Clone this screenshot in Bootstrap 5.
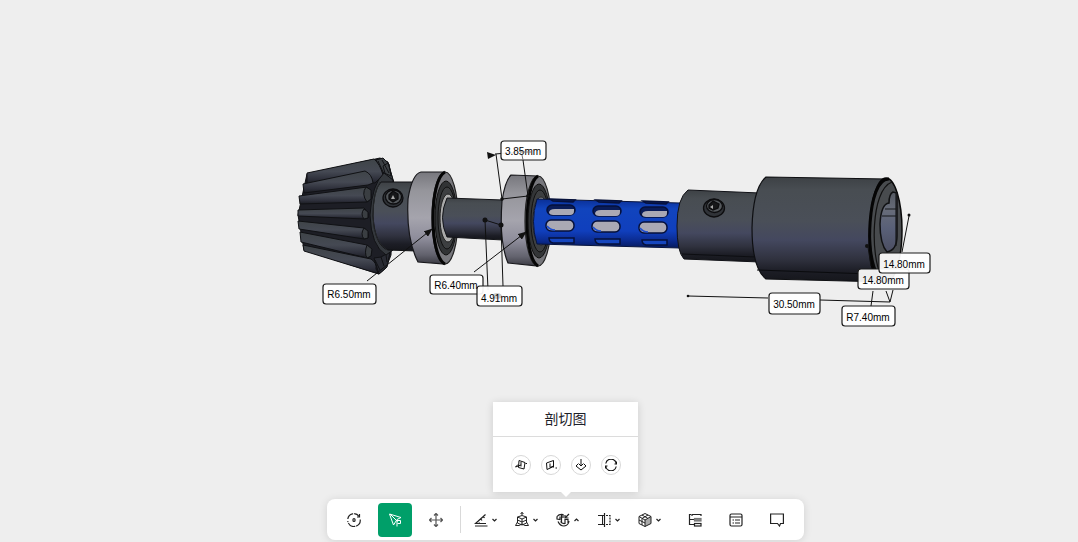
<!DOCTYPE html>
<html lang="zh-CN">
<head>
<meta charset="utf-8">
<meta name="viewport" content="width=device-width, initial-scale=1">
<title>剖切图</title>
<link href="https://cdn.jsdelivr.net/npm/bootstrap@5.3.0/dist/css/bootstrap.min.css" rel="stylesheet">
<style>
  body { background: #eee; font-family: "Liberation Sans", "Noto Sans CJK SC", sans-serif; }
  .viewer { height: 100vh; min-height: 400px; }
  .scene { min-height: 0; }
  .scene text { font: 10px "Liberation Sans", sans-serif; fill: #000; text-anchor: middle; }
  .tag { fill: #fff; fill-opacity: .93; stroke: #1b1b1b; stroke-width: 1.2; }
  .dim { stroke: #111; stroke-width: 1; fill: none; }
  .dock { padding: 0 0 2px 53px; }
  .panel { width: 145px; height: 90px; margin-bottom: 7px; background: #fff; box-shadow: 0 1px 8px rgba(0,0,0,.14); }
  .panel::after { content: ""; position: absolute; left: 50%; top: 100%; margin-left: -5px; border: 5px solid transparent; border-top-color: #fff; border-bottom: 0; }
  .panel-title { height: 35px; font-size: 14px; line-height: 35px; color: #1d2129; border-bottom: 1px solid #dcdcdc; }
  .cuts { gap: 10px; padding-top: 18px; }
  .cut { width: 20px; height: 20px; border: 1px solid #d8d8d8; background: #fff; border-radius: 50%; color: #111; }
  .tools { height: 41px; padding: 0 10px; background: #fff; border-radius: 8px; box-shadow: 0 1px 8px rgba(0,0,0,.12); }
  .tool { height: 34px; width: 34px; border: 0; background: transparent; border-radius: 4px; color: #222; }
  .tool.wide { width: 41px; gap: 3px; }
  .tool.wide .ico:first-child { margin-left: -3px; }
  .tool.on { background: #009f69; color: #fff; }
  .tool-set { gap: 7px; }
  .rule { width: 1px; height: 27px; background: #d9d9d9; margin: 0 6px 0 7px; }
  .tool-set.last { margin-left: 6px; }
  .ico { fill: none; stroke: currentColor; stroke-width: 1.2; }
  .ico.fine { stroke-width: 1; }
</style>
</head>
<body>
<main class="viewer d-flex flex-column overflow-hidden">
  <svg class="scene flex-grow-1 w-100" viewBox="0 0 1078 402" role="img" aria-label="3D 模型">
    <defs>
      <linearGradient id="steel" x1="0" y1="0" x2="0" y2="1">
        <stop offset="0" stop-color="#3d4145"/><stop offset=".12" stop-color="#484d52"/><stop offset=".42" stop-color="#4a4f58"/><stop offset=".6" stop-color="#44485f"/><stop offset=".78" stop-color="#30323f"/><stop offset=".9" stop-color="#1c1d25"/><stop offset="1" stop-color="#15161b"/>
      </linearGradient>
      <linearGradient id="chrome" x1="0" y1="0" x2="0" y2="1">
        <stop offset="0" stop-color="#77777d"/><stop offset=".2" stop-color="#95959b"/><stop offset=".5" stop-color="#a5a4ad"/><stop offset=".72" stop-color="#8e8d9b"/><stop offset=".9" stop-color="#62626d"/><stop offset="1" stop-color="#3a3a42"/>
      </linearGradient>
      <linearGradient id="blue" x1="0" y1="0" x2="0" y2="1">
        <stop offset="0" stop-color="#0a2f96"/><stop offset=".2" stop-color="#1144bd"/><stop offset=".65" stop-color="#103fbd"/><stop offset=".85" stop-color="#0b2b90"/><stop offset="1" stop-color="#061a5c"/>
      </linearGradient>
      <linearGradient id="tooth" x1="0" y1="0" x2="0" y2="1">
        <stop offset="0" stop-color="#3f4448"/><stop offset=".5" stop-color="#454953"/><stop offset=".8" stop-color="#2e303b"/><stop offset="1" stop-color="#1a1b21"/>
      </linearGradient>
      <linearGradient id="bore" x1="0" y1="0" x2="0" y2="1">
        <stop offset="0" stop-color="#555a63"/><stop offset=".3" stop-color="#676c79"/><stop offset=".6" stop-color="#596078"/><stop offset="1" stop-color="#4b4e62"/>
      </linearGradient>
      <marker id="head" markerWidth="9" markerHeight="7" refX="8" refY="3.5" orient="auto" markerUnits="userSpaceOnUse"><path d="M0 0 9 3.5 0 7z" fill="#111"/></marker>
    </defs>

    <!-- bevel gear -->
    <g stroke="#101114" stroke-width="1">
      <path d="M307 174 380 158 388 162 393 180 391 255 386 268 379 274 304 250 298 215z" fill="#1d1e25"/>
      <path d="M376 160 383 158 389 164 391 176 382 172zM383 166 388 163 394 183 388 184z" fill="#3c4044"/>
      <path d="M307 173 374 159Q380 164 383 175L375 183 307 184z" fill="url(#tooth)"/>
      <path d="M303 184 365 171Q372 174 373 183L368 185 304 193z" fill="url(#tooth)"/>
      <path d="M299 196 367 187Q372 191 371 199L367 202 300 204z" fill="url(#tooth)"/>
      <path d="M298 210 364 208Q370 213 368 218L364 219 298 216z" fill="url(#tooth)"/>
      <path d="M298 221 364 228Q370 232 368 238L364 239 299 229z" fill="url(#tooth)"/>
      <path d="M300 232 367 245Q373 249 371 256L367 258 301 242z" fill="url(#tooth)"/>
      <path d="M303 245 371 259Q377 263 376 269L379 274 304 251z" fill="url(#tooth)"/>
      <path d="M366 187Q361 194 367 202L371 199 371 190zM364 209Q360 214 364 219L368 218 368 212zM364 228Q360 234 364 239L368 238 368 231zM367 245Q364 253 367 258L371 256 372 249z" fill="#3a3e42"/>
      <path d="M374 258 381 257 390 252 387 267 379 274z" fill="#292b33"/>
      <path d="M375 260 380 270M381 257 384 266M386 255 387 262M378 161 384 174M382 160 389 173" fill="none"/>
      <path d="M384 173Q372 184 370 215 371 246 386 255L393 250 393 180z" fill="#34383d"/>
      <path d="M381 182H416V251L388 250Q375 246 373 216 373 190 381 182z" fill="url(#steel)"/>
    </g>
    <path d="M380 182Q373 193 373 217 374 242 387 250" fill="none" stroke="#252729"/>
    <g stroke="#0d0d0f" stroke-width="1.3">
      <ellipse cx="393" cy="198" rx="10" ry="9" fill="#303338"/><ellipse cx="393.5" cy="197" rx="8" ry="7" fill="#53575b"/><path d="M389 195 393 191 398 194 398 199 393 202 389 199z" fill="#17181a"/>
    </g>
    <path d="M391 199 393 195 395 199z" fill="#aaa"/>

    <!-- first bearing and shaft -->
    <path d="M445 172H421Q412 174 408 199 406 239 418 262L445 264z" fill="url(#chrome)" stroke="#17171b" stroke-width="1.2"/>
    <ellipse cx="445" cy="218" rx="13" ry="46" fill="#77777c" stroke="#222" stroke-width="1.2"/>
    <path d="M445 172C429 180 429 256 445 264" fill="none" stroke="#050505" stroke-width="3"/>
    <ellipse cx="446" cy="218" rx="11" ry="37" fill="#313335" stroke="#111"/>
    <ellipse cx="447" cy="218" rx="9" ry="31" fill="#3d3f41" stroke="#111"/>
    <ellipse cx="448" cy="218" rx="8" ry="24" fill="#aaa" stroke="#222"/>
    <path d="M447 198 503 200V240L447 237Q438 218 447 198z" fill="url(#steel)" stroke="#141519"/>

    <!-- second bearing -->
    <path d="M538 176 511 175Q505 181 502 201 499 242 508 263L538 266z" fill="url(#chrome)" stroke="#17171b" stroke-width="1.2"/>
    <ellipse cx="538" cy="221" rx="13" ry="45" fill="#77777c" stroke="#222" stroke-width="1.2"/>
    <path d="M538 176C524 184 523 257 538 266" fill="none" stroke="#050505" stroke-width="3"/>
    <ellipse cx="539" cy="221" rx="11" ry="37" fill="#333537" stroke="#111"/>
    <ellipse cx="540" cy="221" rx="9" ry="31" fill="#3d3f41" stroke="#111"/>
    <ellipse cx="541" cy="221" rx="8" ry="24" fill="#999" stroke="#222"/>

    <!-- slotted sleeve -->
    <path d="M537 199 680 203V248L537 244Q530 222 537 199z" fill="url(#blue)" stroke="#08153f"/>
    <g stroke="#06113b" stroke-width="1.5">
      <g id="slots">
        <path d="M550 199 575 200 573 202 553 201z" fill="#091d5f"/>
        <rect x="547" y="205" width="28" height="10" rx="5" fill="#0a1c58"/><path d="M549 213Q549 209 555 209H574V211Q574 215 570 215H553Q550 215 549 213z" fill="#aaa9b4" stroke="none"/>
        <rect x="546" y="220" width="28" height="11" rx="5" fill="#aaa9b4"/><path d="M547 226Q550 230 555 230" stroke="#1d4ed0" fill="none"/>
        <path d="M549 238H574V243H553Q549 242 549 238z" fill="#1646be"/>
      </g>
      <use href="#slots" x="46" y="1"/>
      <use href="#slots" x="93" y="2"/>
    </g>

    <!-- couplings -->
    <path d="M688 190 760 193V262L684 259Q677 252 677 226 677 198 688 190z" fill="url(#steel)" stroke="#111217"/>
    <path d="M682 254 756 257" stroke="#0d0e12"/>
    <g stroke="#0d0d0f" stroke-width="1.3">
      <ellipse cx="714" cy="208" rx="10.5" ry="9" fill="#303338"/><ellipse cx="714.5" cy="206" rx="8" ry="6.5" fill="#55595d"/><path d="M709 205 713 201 719 204 718 208 713 210 709 208z" fill="#17181a"/>
    </g>
    <path d="M710 207 713 205 713 209z" fill="#aaa"/>
    <path d="M766 177 886 179V282L766 279Q752 268 752 228 753 188 766 177z" fill="url(#steel)" stroke="#0e0f12" stroke-width="1.2"/>
    <path d="M757 270 870 274" stroke="#0a0b0e"/>
    <ellipse cx="886" cy="230" rx="16" ry="52" fill="#484b4e" stroke="#090909" stroke-width="1.5"/>
    <path d="M889 179C866 178 866 263 876 275" fill="none" stroke="#050505" stroke-width="3"/>
    <path d="M892 182C870 190 871 258 881 275" fill="none" stroke="#111" stroke-width="1.2"/>
    <path d="M893 192Q889 194 889 203 881 204 880 224 880 244 887 252 897 250 897 236V193z" fill="url(#bore)" stroke="#101113" stroke-width="1.5"/>
    <path d="M885 209H896M882 216H896M896 193V246" stroke="#17181a" stroke-width="1.2"/>

    <!-- dimension lines -->
    <g class="dim">
      <path d="M367 281 432 229" marker-end="url(#head)"/>
      <path d="M474 272 526 232" marker-end="url(#head)"/>
      <path d="M496 154 502 199 528 196 523 160M485 220 501 225M485 220 488 290M501 225 503 286"/>
      <path d="M495 154 520 152"/>
      <path d="M688 296 768 298M820 300 890 302 886 291M890 302 893 290M871 306 873 291M909 216 902 252"/>
      <path d="M871 266 868 247"/>
    </g>
    <path d="M487 152 496 155 488 159z" fill="#111"/>
    <g fill="#111"><circle cx="485" cy="220" r="2.5"/><circle cx="501" cy="225" r="2.5"/><circle cx="502" cy="199" r="1.8"/><circle cx="528" cy="196" r="1.8"/><circle cx="688" cy="296" r="1.3"/><circle cx="909" cy="215" r="1.5"/><circle cx="867" cy="246" r="2"/></g>

    <!-- dimension tags -->
    <rect class="tag" x="501" y="141" width="45" height="19" rx="3"/><text x="523" y="155">3.85mm</text>
    <rect class="tag" x="323" y="284" width="53" height="20" rx="3"/><text x="349" y="298">R6.50mm</text>
    <rect class="tag" x="430" y="275" width="53" height="19" rx="3"/><text x="456" y="289">R6.40mm</text>
    <rect class="tag" x="477" y="286" width="45" height="20" rx="3"/><ellipse cx="497" cy="296" rx="5" ry="3" fill="#ccc"/><text x="499" y="302">4.91mm</text>
    <rect class="tag" x="769" y="293" width="51" height="21" rx="3"/><text x="794" y="308">30.50mm</text>
    <rect class="tag" x="858" y="269" width="51" height="20" rx="3"/><text x="883" y="284">14.80mm</text>
    <rect class="tag" x="879" y="253" width="51" height="20" rx="3"/><text x="904" y="268">14.80mm</text>
    <rect class="tag" x="842" y="306" width="53" height="20" rx="3"/><text x="868" y="321">R7.40mm</text>
    <path d="M520 152H531M522 155 523 160" stroke="#777"/>
  </svg>

  <div class="dock d-flex flex-column align-items-center flex-shrink-0">
    <section class="panel position-relative" aria-label="剖切图">
      <div class="panel-title text-center">剖切图</div>
      <div class="cuts d-flex justify-content-center">
        <button class="cut p-0 d-flex align-items-center justify-content-center" aria-label="X 平面"><svg class="ico fine" width="12" height="12" viewBox="0 0 12 12"><path d="M4 1.5 10 3.5 9 10 3.5 8.5zM.5 8 6 6M6 3V7.5M10.5 4.5H12M.5 8 3 5.5"/></svg></button>
        <button class="cut p-0 d-flex align-items-center justify-content-center" aria-label="Y 平面"><svg class="ico fine" width="12" height="12" viewBox="0 0 12 12"><path d="M1.5 4 8.5 1.500V7.5L2 10.500zM8.500 2V8.500M5 8.500 8.500 7M5 4.500V8.500M10.500 9H12"/></svg></button>
        <button class="cut p-0 d-flex align-items-center justify-content-center" aria-label="Z 平面"><svg class="ico fine" width="12" height="12" viewBox="0 0 12 12"><path d="M3.500 4.500 1 7 6 11 11 7 8.500 4.500M6 0V7M4 5 6 7 8 5"/></svg></button>
        <button class="cut p-0 d-flex align-items-center justify-content-center" aria-label="反向"><svg class="ico" width="12" height="12" viewBox="0 0 12 12"><path d="M.8 4.500A5.300 5.300 0 0 1 11.200 4.500M11.500 2.500V5H9.500M11.200 7.500A5.300 5.300 0 0 1 .8 7.500M.5 9.500V7H2.500"/></svg></button>
      </div>
    </section>

    <nav class="tools d-flex align-items-center" aria-label="工具栏">
      <div class="tool-set d-flex">
        <button class="tool p-0 d-flex align-items-center justify-content-center" aria-label="旋转"><svg class="ico" width="14" height="14" viewBox="0 0 14 14"><path d="M.8 6A6.200 6.200 0 0 1 12 3.300M13.200 6.500A6.200 6.200 0 0 1 .8 8" stroke-dasharray="8 1"/><path d="M12.500 1V4H10"/><rect x="6" y="5.500" width="2" height="3" rx="1"/></svg></button>
        <button class="tool on p-0 d-flex align-items-center justify-content-center" aria-label="选择" aria-pressed="true"><svg class="ico fine" width="14" height="14" viewBox="0 0 14 14"><path d="M1.500 1 13 4.500 9 6.500 5.500 12zM2 1 9.500 8.500M9 13.500V7.500H12.500V10.500H9.500"/></svg></button>
        <button class="tool p-0 d-flex align-items-center justify-content-center" aria-label="平移"><svg class="ico" width="14" height="14" viewBox="0 0 14 14" stroke-linejoin="round"><path d="M7 1V13M1 7H13M5 2.500 7 .5 9 2.500M5 11.500 7 13.500 9 11.500M2.500 5 .5 7 2.500 9M11.500 5 13.500 7 11.500 9" stroke="#555"/></svg></button>
      </div>
      <div class="rule"></div>
      <button class="tool wide p-0 d-flex align-items-center justify-content-center" aria-label="测量"><svg class="ico" width="14" height="14" viewBox="0 0 14 14"><path d="M1 13H13.500M11.500 1.500 1.500 10.500H12M4 7.500 5.500 9.500M6.500 5.500 8 7.500M9 3 10.500 5"/></svg><svg class="ico" width="7" height="6" viewBox="0 0 7 6"><path d="M1.500 2 3.500 4 5.500 2"/></svg></button>
      <button class="tool wide p-0 d-flex align-items-center justify-content-center" aria-label="爆炸图"><svg class="ico fine" width="14" height="16" viewBox="0 0 14 16"><path d="M7 0V3M5.500 2 7 .5 8.500 2M2.500 5 7 3.500 11.500 5V11L7 13 2.500 11zM2.500 5 7 7 11.500 5M7 7V13M2.500 8 7 10 11.500 8M2.500 10 .5 13.500H4M11.500 10 13.500 13.500H10M4 13.500 7 12 10 13.500"/></svg><svg class="ico" width="7" height="6" viewBox="0 0 7 6"><path d="M1.500 2 3.500 4 5.500 2"/></svg></button>
      <button class="tool wide p-0 d-flex align-items-center justify-content-center" aria-label="剖切图" aria-expanded="true"><svg class="ico" width="14" height="14" viewBox="0 0 14 14"><path d="M1 3.500Q3 1 7 1.500V5M1 3.500V6L4 6.500V3.500M5.500 2V10M2 8.500Q4 13 8 13 12.500 12.500 13 8M4.500 8.500Q6 11 9 10.500V6.500H12V10M13 1 9 5M9 2V5H12.500"/></svg><svg class="ico" width="7" height="6" viewBox="0 0 7 6"><path d="M1.500 4 3.500 2 5.500 4"/></svg></button>
      <button class="tool wide p-0 d-flex align-items-center justify-content-center" aria-label="视图"><svg class="ico" width="14" height="14" viewBox="0 0 14 14"><path d="M7.500 0V14M7.500 2.500H1M1 11.500H7.500"/><path d="M5.500 2.500V11.500" stroke-width="1"/><path d="M9 2.500H13V11.500H9" stroke-dasharray="2 1"/></svg><svg class="ico" width="7" height="6" viewBox="0 0 7 6"><path d="M1.500 2 3.500 4 5.500 2"/></svg></button>
      <button class="tool wide p-0 d-flex align-items-center justify-content-center" aria-label="显示模式"><svg class="ico fine" width="14" height="14" viewBox="0 0 14 14"><path d="M7 7 13 4V10.500L7 13.500z" fill="#aaa" stroke="none"/><path d="M7 .5 13 3.500V10.500L7 13.500 1 10.500V3.500zM1 3.500 7 7 13 3.500M7 7V13.500M4 2 10 5.500M10 2 4 5.500V12M1 7 7 10"/></svg><svg class="ico" width="7" height="6" viewBox="0 0 7 6"><path d="M1.500 2 3.500 4 5.500 2"/></svg></button>
      <div class="tool-set last d-flex">
        <button class="tool p-0 d-flex align-items-center justify-content-center" aria-label="结构树"><svg class="ico" width="14" height="14" viewBox="0 0 14 14"><path d="M1.500 1V11.500H6M1.500 6.500H6M1 1.500H3M4 3V1.500H13V3"/><rect x="6.500" y="5.500" width="6.500" height="2.500" fill="#888" stroke="#777"/><rect x="6.500" y="10.500" width="6.500" height="2.500"/></svg></button>
        <button class="tool p-0 d-flex align-items-center justify-content-center" aria-label="属性"><svg class="ico" width="14" height="14" viewBox="0 0 14 14"><rect x="1" y="1" width="12" height="12" rx="1.500"/><path d="M1 4H13M3.500 7H5M6 7H11M3.500 10H5M6 10H11"/></svg></button>
        <button class="tool p-0 d-flex align-items-center justify-content-center" aria-label="评论"><svg class="ico" width="14" height="14" viewBox="0 0 14 14"><path d="M.6 1H13.400V10.500H10.500L9.500 13 7.500 10.500H.6z"/></svg></button>
      </div>
    </nav>
  </div>
</main>
<script src="https://cdn.jsdelivr.net/npm/bootstrap@5.3.0/dist/js/bootstrap.bundle.min.js"></script>
</body>
</html>
